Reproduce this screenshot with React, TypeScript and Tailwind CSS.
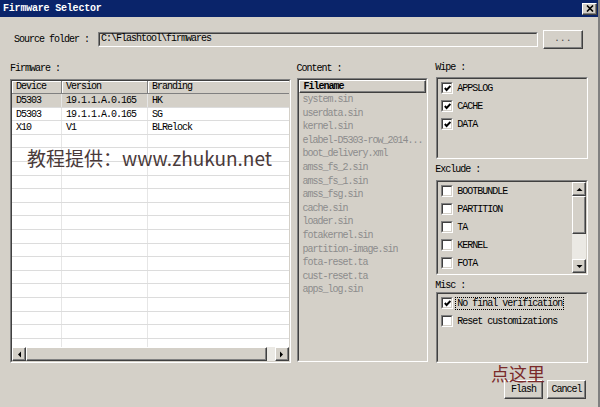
import React from "react";

const mono = "[font-family:'Liberation_Mono',monospace]";

const firmwares = [
  { device: "D5303", version: "19.1.1.A.0.165", branding: "HK", selected: true },
  { device: "D5303", version: "19.1.1.A.0.165", branding: "SG" },
  { device: "X10", version: "V1", branding: "BLRelock" },
];

const files = [
  "system.sin",
  "userdata.sin",
  "kernel.sin",
  "elabel-D5303-row_2014...",
  "boot_delivery.xml",
  "amss_fs_2.sin",
  "amss_fs_1.sin",
  "amss_fsg.sin",
  "cache.sin",
  "loader.sin",
  "fotakernel.sin",
  "partition-image.sin",
  "fota-reset.ta",
  "cust-reset.ta",
  "apps_log.sin",
];

// classic windows sunken frame (two borders)
const Sunken = ({ className = "", inner = "", children }: { className?: string; inner?: string; children?: React.ReactNode }) => (
  <div className={`border border-t-[#808080] border-l-[#808080] border-r-white border-b-white ${className}`}>
    <div className={`h-full w-full border border-t-[#404040] border-l-[#404040] border-r-[#d4d0c8] border-b-[#d4d0c8] ${inner}`}>
      {children}
    </div>
  </div>
);

const raised =
  "border border-t-white border-l-white border-r-[#404040] border-b-[#404040] shadow-[inset_-1px_-1px_0_#808080] bg-[#d4d0c8]";

const Arrow = ({ dir }: { dir: "up" | "down" | "left" | "right" }) => {
  const pts = {
    up: "0.5,4 3.5,1 6.5,4",
    down: "0.5,1 3.5,4 6.5,1",
    left: "4,0.5 1,3.5 4,6.5",
    right: "1,0.5 4,3.5 1,6.5",
  }[dir];
  const vertical = dir === "up" || dir === "down";
  return (
    <svg width={vertical ? 7 : 5} height={vertical ? 5 : 7} viewBox={vertical ? "0 0 7 5" : "0 0 5 7"}>
      <polygon points={pts} fill="#000" />
    </svg>
  );
};

const ScrollBtn = ({ dir }: { dir: "up" | "down" | "left" | "right" }) => (
  <div className={`${raised} flex h-[14px] w-[14px] shrink-0 items-center justify-center`}>
    <Arrow dir={dir} />
  </div>
);

const Checkbox = ({ checked }: { checked?: boolean }) => (
  <Sunken className="h-[12px] w-[12px] shrink-0" inner="bg-white flex items-center justify-center">
    {checked && (
      <svg width="7" height="7" viewBox="0 0 7 7">
        <polyline points="0.8,3 2.6,5 6.4,1" fill="none" stroke="#000" strokeWidth="1.9" />
      </svg>
    )}
  </Sunken>
);

const CheckRow = ({ label, checked, focus }: { label: string; checked?: boolean; focus?: boolean }) => (
  <div className="flex h-[18px] items-center pl-[3px]">
    <Checkbox checked={checked} />
    <span
      className={`ml-[2px] px-[1px] text-[10px] leading-[11px] tracking-[-1px] text-black ${
        focus ? "border border-dotted border-black" : "border border-transparent"
      }`}
    >
      {label}
    </span>
  </div>
);

export default function App() {
  return (
    <div className={`relative flex h-[407px] w-[600px] flex-col overflow-hidden border-r-2 border-r-[#808080] bg-[#d4d0c8] ${mono}`}>
      {/* title bar */}
      <div className="flex h-[17px] shrink-0 items-center justify-between bg-[#0a246a] pl-[3px] pr-[1px]">
        <span className="text-[10px] font-bold leading-none tracking-[-0.2px] text-white">Firmware Selector</span>
        <div className={`${raised} flex h-[12px] w-[15px] items-center justify-center`}>
          <svg width="8" height="7" viewBox="0 0 8 7">
            <path d="M1 0.5 L7 6.5 M7 0.5 L1 6.5" stroke="#000" strokeWidth="1.6" />
          </svg>
        </div>
      </div>

      <div className="flex flex-1 flex-col px-[10px]">
        {/* source folder */}
        <div className="mt-[12px] flex h-[20px] items-center">
          <span className="w-[88px] shrink-0 pl-[4px] text-[10px] tracking-[-1px] text-black">Source folder :</span>
          <Sunken className="h-[15px] w-[440px]" inner="bg-[#d4d0c8] flex items-center pl-[1px]">
            <span className="text-[10px] leading-none tracking-[-1px] text-black">C:\Flashtool\firmwares</span>
          </Sunken>
          <div className={`${raised} ml-[5px] flex h-[19px] w-[40px] items-center justify-center`}>
            <span className="text-[9px] leading-none tracking-[0.5px] text-[#404040]">...</span>
          </div>
        </div>

        {/* main columns */}
        <div className="mt-[11px] flex h-[303px] gap-[6px]">
          {/* firmware table */}
          <div className="flex w-[281px] flex-col">
            <div className="h-[18px] text-[10px] leading-[17px] tracking-[-1px] text-black">Firmware :</div>
            <Sunken className="mt-[1px] h-[284px]" inner="bg-white flex flex-col overflow-hidden">
              <div className="flex h-[13px] shrink-0 text-[10px] leading-[12px] tracking-[-1px] text-black">
                <div className="w-[50px] border-r border-b border-r-[#808080] border-b-[#808080] bg-[#d4d0c8] pl-[4px] shadow-[inset_1px_1px_0_white]">Device</div>
                <div className="w-[86px] border-r border-b border-r-[#808080] border-b-[#808080] bg-[#d4d0c8] pl-[4px] shadow-[inset_1px_1px_0_white]">Version</div>
                <div className="flex-1 border-b border-b-[#808080] bg-[#d4d0c8] pl-[4px] shadow-[inset_1px_1px_0_white]">Branding</div>
              </div>
              <div className="flex-1 overflow-hidden">
                {Array.from({ length: 20 }).map((_, i) => {
                  const f = firmwares[i];
                  return (
                    <div
                      key={i}
                      className={`flex h-[13.6px] border-b border-b-[#dcdcdc] text-[10px] leading-[13px] tracking-[-1px] text-black ${
                        f?.selected ? "bg-[#d4d0c8]" : ""
                      }`}
                    >
                      <div className="w-[50px] border-r border-r-[#e6e6e6] pl-[4px]">{f?.device}</div>
                      <div className="w-[86px] border-r border-r-[#e6e6e6] pl-[4px]">{f?.version}</div>
                      <div className="flex-1 pl-[4px]">{f?.branding}</div>
                    </div>
                  );
                })}
              </div>
              <div className="flex h-[14px] shrink-0">
                <ScrollBtn dir="left" />
                <div className={`${raised} w-[241px]`} />
                <div className="flex-1 bg-[#ebe9e4]" />
                <ScrollBtn dir="right" />
              </div>
            </Sunken>
          </div>

          {/* content */}
          <div className="flex w-[132px] flex-col">
            <div className="h-[18px] text-[10px] leading-[17px] tracking-[-1px] text-black">Content :</div>
            <Sunken className="h-[284px]" inner="bg-[#d4d0c8] flex flex-col overflow-hidden">
              <div className={`${raised} flex h-[13px] shrink-0 items-center pl-[4px]`}>
                <span className="text-[10px] font-bold leading-none tracking-[-1px] text-black">Filename</span>
              </div>
              {files.map((f) => (
                <div key={f} className="h-[13.6px] whitespace-nowrap pl-[4px] text-[10px] leading-[13px] tracking-[-1px] text-[#8c8c8c]">
                  {f}
                </div>
              ))}
            </Sunken>
          </div>

          {/* options */}
          <div className="ml-[1px] flex w-[153px] flex-col">
            <div className="h-[17px] text-[10px] leading-[16px] tracking-[-1px] text-black">Wipe :</div>
            <Sunken className="ml-[1px] h-[82px]" inner="bg-[#d4d0c8]">
              <CheckRow label="APPSLOG" checked />
              <CheckRow label="CACHE" checked />
              <CheckRow label="DATA" checked />
            </Sunken>
            <div className="flex h-[21px] items-center text-[10px] tracking-[-1px] text-black">Exclude :</div>
            <Sunken className="ml-[1px] h-[95px]" inner="bg-[#d4d0c8] flex">
              <div className="flex-1">
                <CheckRow label="BOOTBUNDLE" />
                <CheckRow label="PARTITION" />
                <CheckRow label="TA" />
                <CheckRow label="KERNEL" />
                <CheckRow label="FOTA" />
              </div>
              <div className="flex w-[14px] flex-col">
                <ScrollBtn dir="up" />
                <div className={`${raised} h-[38px]`} />
                <div className="flex-1 bg-[#ebe9e4]" />
                <ScrollBtn dir="down" />
              </div>
            </Sunken>
            <div className="h-[17px] pt-[4px] text-[10px] leading-[13px] tracking-[-1px] text-black">Misc :</div>
            <Sunken className="ml-[1px] h-[71px]" inner="bg-[#d4d0c8]">
              <CheckRow label="No final verification" checked focus />
              <CheckRow label="Reset customizations" />
            </Sunken>
          </div>
        </div>

        {/* buttons */}
        <div className="mt-[17px] flex justify-end gap-[4px] pr-[2px]">
          <div className={`${raised} flex h-[19px] w-[39px] items-center justify-center`}>
            <span className="text-[10px] leading-none tracking-[-1px] text-black">Flash</span>
          </div>
          <div className={`${raised} flex h-[19px] w-[39px] items-center justify-center`}>
            <span className="text-[10px] leading-none tracking-[-1px] text-black">Cancel</span>
          </div>
        </div>
      </div>

      {/* overlays */}
      <div className="absolute left-[27px] top-[146px] whitespace-nowrap text-[19px] leading-[24px] text-[#4a3a3a] [font-family:'Noto_Sans_CJK_SC',sans-serif]">
        教程提供：www.zhukun.net
      </div>
      <div className="absolute left-[491px] top-[363px] whitespace-nowrap text-[18px] leading-[20px] text-[#7a2a2a] [font-family:'Noto_Sans_CJK_SC',sans-serif]">
        点这里
      </div>
    </div>
  );
}
